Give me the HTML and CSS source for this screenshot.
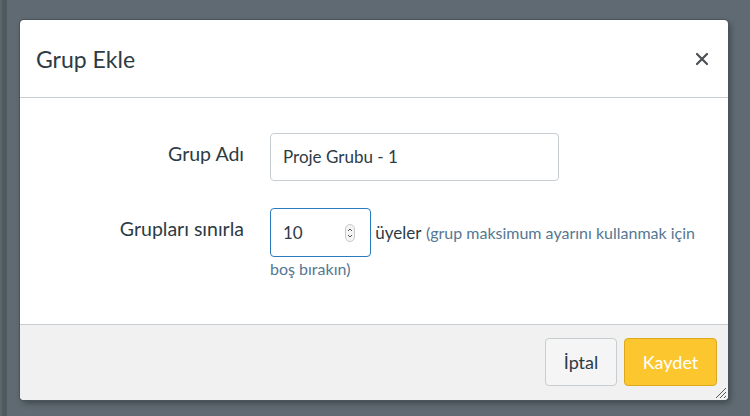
FILE: index.html
```html
<!DOCTYPE html>
<html lang="tr">
<head>
<meta charset="utf-8">
<link rel="stylesheet" href="styles.css">
</head>
<body>
<div class="page-stripe"></div>
<div class="dialog">
  <div class="dialog-header">
    <h1 class="dialog-title">Grup Ekle</h1>
    <button class="close-btn" aria-label="Kapat">
      <svg width="14" height="14" viewBox="0 0 14 14"><path d="M2 2 L12 12 M12 2 L2 12" stroke="#4a4f53" stroke-width="2.2" stroke-linecap="round"/></svg>
    </button>
  </div>
  <div class="dialog-body">
    <div class="form-row">
      <label class="form-label">Grup Adı</label>
      <div class="form-control">
        <div class="text-input">Proje Grubu - 1</div>
      </div>
    </div>
    <div class="form-row">
      <label class="form-label">Grupları sınırla</label>
      <div class="form-control">
        <span class="number-input"><span class="num-value">10</span><svg class="spinner" width="10" height="18" viewBox="0 0 10 18"><rect x="0.5" y="0.5" width="9" height="17" rx="4.5" fill="#f4f4f4" stroke="#c9c9c9"/><path d="M3 7 L5 5 L7 7 M3 11 L5 13 L7 11" fill="none" stroke="#555" stroke-width="1"/></svg></span> <span class="unit">üyeler</span> <span class="hint">(grup maksimum ayarını kullanmak için</span> <span class="hint">boş bırakın)</span>
      </div>
    </div>
  </div>
  <div class="dialog-footer">
    <button class="btn btn-default">İptal</button>
    <button class="btn btn-primary">Kaydet</button>
    <svg class="resize" width="14" height="14" viewBox="0 0 14 14"><path d="M13 3 L3 13 M13 7 L7 13 M13 11 L11 13" stroke="#555" stroke-width="1"/></svg>
  </div>
</div>
</body>
</html>
```
FILE: styles.css
```css
* { box-sizing: border-box; }
html, body { margin: 0; padding: 0; }
body {
  width: 750px;
  height: 416px;
  background: #5f6a72;
  font-family: Lato, "Open Sans", sans-serif;
  color: #2d3b45;
  padding: 20px 22px 16px 20px;
  position: relative;
  overflow: hidden;
}
.page-stripe {
  position: absolute;
  left: 0; top: 0; bottom: 0;
  width: 7px;
  background: linear-gradient(to right, #5a656c 0, #5a656c 2px, #4e5960 2px, #4e5960 7px);
}
.dialog {
  position: relative;
  width: 708px;
  height: 380px;
  background: #fff;
  border-radius: 4px;
  box-shadow: 0 0 0 1px #4a545b, 2px 3px 6px rgba(0,0,0,0.35);
  display: flex;
  flex-direction: column;
  overflow: hidden;
}
.dialog-header {
  height: 78px;
  border-bottom: 1px solid #c7cdd1;
  display: flex;
  align-items: center;
  justify-content: space-between;
  padding: 0 18px 0 16px;
  flex: none;
}
.dialog-title {
  margin: 0;
  font-weight: 400;
  font-size: 23px;
  color: #2d3b45;
}
.close-btn {
  border: none;
  background: none;
  padding: 0;
  width: 16px;
  height: 16px;
  display: flex;
  align-items: center;
  justify-content: center;
}
.dialog-body {
  flex: 1;
  padding: 35px 20px 0 0;
}
.form-row {
  display: grid;
  grid-template-columns: 224px 1fr;
  column-gap: 26px;
  margin-bottom: 27px;
}
.form-label {
  text-align: right;
  font-size: 19.5px;
  color: #2d3b45;
  padding-top: 10px;
  line-height: 22px;
}
.form-control {
  font-size: 17px;
  line-height: 20px;
}
.text-input {
  width: 289px;
  height: 48px;
  border: 1px solid #c7cdd1;
  border-radius: 4px;
  padding: 0 12px;
  display: flex;
  align-items: center;
  font-size: 17px;
  color: #2d3b45;
}
.number-input {
  display: inline-flex;
  align-items: center;
  justify-content: space-between;
  width: 101px;
  height: 49px;
  border: 1px solid #2b7abc;
  border-radius: 4px;
  padding: 0 15px 0 12px;
  vertical-align: middle;
  font-size: 17px;
  color: #2d3b45;
}
.spinner { display: block; }
.unit {
  font-size: 17px;
  color: #2d3b45;
  vertical-align: middle;
}
.hint {
  font-size: 16px;
  line-height: 22px;
  color: #557792;
  vertical-align: middle;
}
.dialog-footer {
  flex: none;
  height: 76px;
  background: #f1f1f1;
  border-top: 1px solid #c7cdd1;
  display: flex;
  justify-content: flex-end;
  align-items: flex-start;
  gap: 7px;
  padding: 13px 11px 0 0;
  position: relative;
}
.btn {
  height: 48px;
  border-radius: 4px;
  font-family: Lato, "Open Sans", sans-serif;
  font-size: 18px;
  padding: 0 12px;
  cursor: pointer;
}
.btn-default {
  width: 72px;
  background: #f5f5f5;
  border: 1px solid #c7cdd1;
  color: #2d3b45;
}
.btn-primary {
  width: 93px;
  background: #fcc62f;
  border: 1px solid #dca91c;
  color: #fff;
}
.resize {
  position: absolute;
  right: 1px;
  bottom: 1px;
}
```
